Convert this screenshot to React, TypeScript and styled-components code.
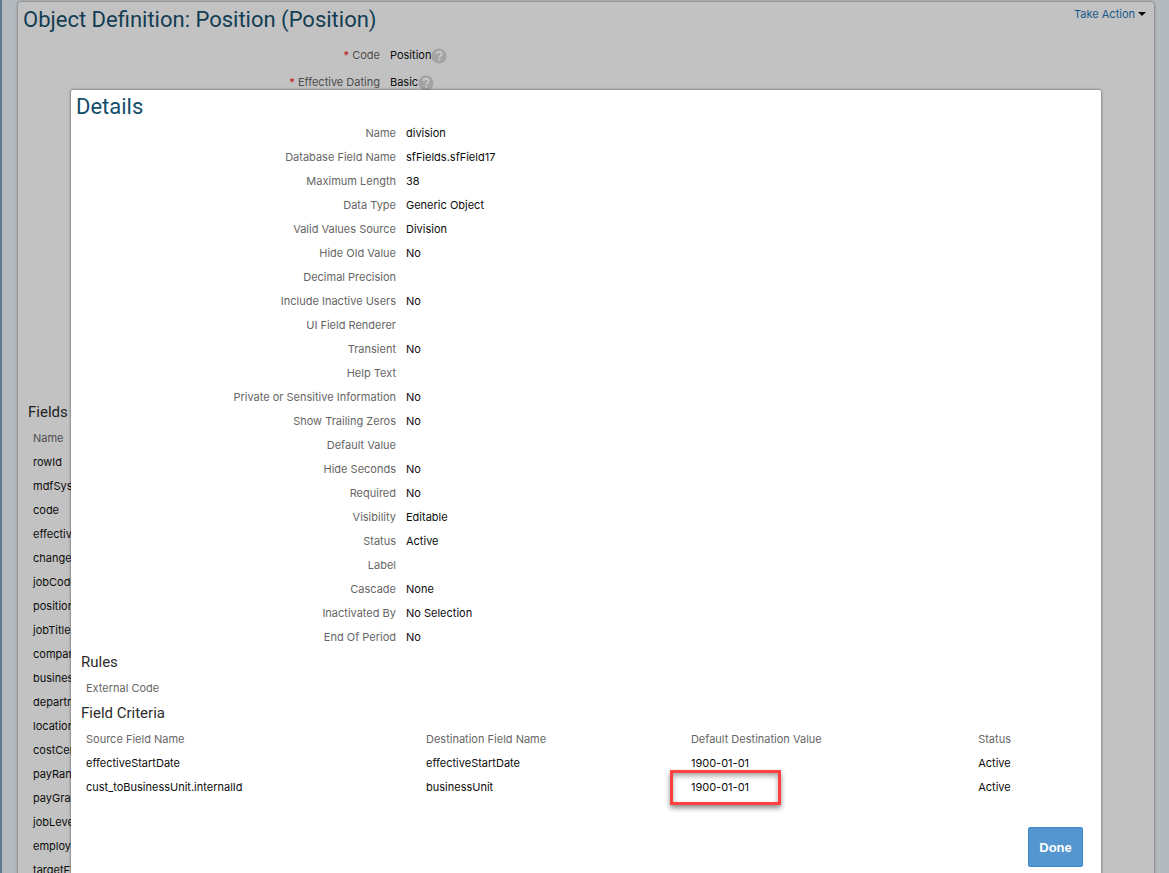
import React from "react";
import styled, { createGlobalStyle } from "styled-components";

const GlobalStyle = createGlobalStyle`
  *, *::before, *::after { box-sizing: border-box; }
  body {
    margin: 0;
    background: #b5babf;
    color: #0c0c0c;
    font-family: Inter, "Liberation Sans", sans-serif;
    font-size: 11px;
    line-height: 24px;
  }
  h1, h2, h3, dl, dt, dd { margin: 0; font-weight: 400; }
`;

const Page = styled.div`
  position: relative;
  height: 100vh;
  overflow: hidden;
  padding: 2px 15px 0 16px;
  border-left: 2px solid #5f7a8f;
`;

const Card = styled.main`
  min-height: 100%;
  padding: 0 5px;
  background: #c2c2c2;
  border-radius: 3px 3px 0 0;
  box-shadow: 0 0 3px rgba(0, 0, 0, 0.55);
`;

const CardHeader = styled.header`
  display: flex;
  justify-content: space-between;
  align-items: flex-start;
  padding-right: 3px;
`;

const Title = styled.h1`
  font-family: Roboto, "Noto Sans", sans-serif;
  font-size: 22px;
  line-height: 36px;
  color: ${(p: { $dim?: boolean }) => (p.$dim ? "#133d53" : "#134e6b")};
`;

const ActionButton = styled.button`
  display: flex;
  align-items: center;
  gap: 3px;
  padding: 0;
  border: 0;
  background: none;
  color: #17588a;
  font: inherit;
  cursor: pointer;
`;

const Caret = styled.span`
  border: 4px solid transparent;
  border-top-color: #0c0c0c;
  border-bottom: 0;
`;

const Fields = styled.dl<{ $label: number; $row: number }>`
  display: grid;
  grid-template-columns: ${(p) => p.$label}px 1fr;
  grid-auto-rows: ${(p) => p.$row}px;
  align-items: center;
  column-gap: 10px;
`;

const ObjectFields = styled(Fields)`
  min-height: 361px;
  align-content: start;
  padding-top: 3px;
`;

const Label = styled.dt<{ $dim?: boolean }>`
  text-align: right;
  color: ${(p) => (p.$dim ? "#4d4d4d" : "#666")};
`;

const Required = styled.span`
  color: #c00e0e;
`;

const Value = styled.dd`
  display: flex;
  align-items: center;
`;

const HelpButton = styled.button`
  display: grid;
  padding: 2px 0 0;
  border: 0;
  background: none;
  cursor: help;
`;

const SectionTitle = styled.h2<{ $dim?: boolean }>`
  padding-left: 5px;
  font-family: Roboto, "Noto Sans", sans-serif;
  font-size: 15px;
  line-height: 27px;
  color: ${(p) => (p.$dim ? "#222" : "#2c2c2c")};
`;

const Table = styled.table<{ $dim?: boolean }>`
  width: calc(100% - 5px);
  margin-left: 5px;
  border-collapse: collapse;
  table-layout: fixed;

  th, td {
    position: relative;
    height: 24px;
    padding: 0 5px;
    text-align: left;
    font-weight: 400;
    white-space: nowrap;
  }
  th { color: ${(p) => (p.$dim ? "#4d4d4d" : "#666")}; }
`;

const Dialog = styled.section`
  position: absolute;
  top: 90px;
  left: 69px;
  right: 68px;
  min-height: calc(100% - 90px);
  padding: 2px 5px 16px;
  background: #fff;
  border-radius: 2px;
  box-shadow: 0 0 3px rgba(0, 0, 0, 0.6);
`;

const DialogTitle = styled(Title).attrs({ as: "h2" })`
  line-height: 29px;
`;

const Marker = styled.span`
  position: absolute;
  top: -5px;
  bottom: -6px;
  left: -16px;
  width: 111px;
  border: 3px solid #ff4141;
  box-shadow: 0 3px 5px rgba(0, 0, 0, 0.45), inset 0 3px 5px rgba(0, 0, 0, 0.35);
  pointer-events: none;
`;

const DialogFooter = styled.footer`
  display: flex;
  justify-content: flex-end;
  padding: 28px 13px 0 0;
`;

const DoneButton = styled.button`
  width: 55px;
  height: 40px;
  padding: 0;
  border: 1px solid #4289c9;
  border-radius: 2px;
  background: #5496cf;
  color: #fff;
  font: 700 13px "Liberation Sans", sans-serif;
  cursor: pointer;
`;

const HelpIcon = () => (
  <svg width="16" height="16" viewBox="0 0 16 16" aria-hidden="true">
    <circle cx="8" cy="8" r="7.6" fill="#a3a3a3" />
    <path
      d="M5.4 6.2C5.5 4.6 6.5 3.8 8 3.8s2.6.9 2.6 2.2c0 1.7-2.2 1.8-2.2 3.6"
      fill="none"
      stroke="#c8c8c8"
      strokeWidth="1.9"
    />
    <rect x="7.3" y="10.7" width="2" height="2" fill="#c8c8c8" />
  </svg>
);

const objectFields = [
  ["Code", "Position"],
  ["Effective Dating", "Basic"],
];

const fieldNames = [
  "rowId", "mdfSystemStatus", "code", "effectiveStatus", "changeReason", "jobCode",
  "positionTitle", "jobTitle", "company", "businessUnit", "department", "location",
  "costCenter", "payRange", "payGrade", "jobLevel", "employeeClass", "targetFTE",
];

const details = [
  ["Name", "division"],
  ["Database Field Name", "sfFields.sfField17"],
  ["Maximum Length", "38"],
  ["Data Type", "Generic Object"],
  ["Valid Values Source", "Division"],
  ["Hide Old Value", "No"],
  ["Decimal Precision", ""],
  ["Include Inactive Users", "No"],
  ["UI Field Renderer", ""],
  ["Transient", "No"],
  ["Help Text", ""],
  ["Private or Sensitive Information", "No"],
  ["Show Trailing Zeros", "No"],
  ["Default Value", ""],
  ["Hide Seconds", "No"],
  ["Required", "No"],
  ["Visibility", "Editable"],
  ["Status", "Active"],
  ["Label", ""],
  ["Cascade", "None"],
  ["Inactivated By", "No Selection"],
  ["End Of Period", "No"],
];

const criteria = [
  { source: "effectiveStartDate", target: "effectiveStartDate", value: "1900-01-01", status: "Active" },
  { source: "cust_toBusinessUnit.internalId", target: "businessUnit", value: "1900-01-01", status: "Active", marked: true },
];

export default function App() {
  return (
    <Page>
      <GlobalStyle />
      <Card>
        <CardHeader>
          <Title $dim>Object Definition: Position (Position)</Title>
          <ActionButton type="button">
            Take Action <Caret />
          </ActionButton>
        </CardHeader>
        <ObjectFields $label={357} $row={27}>
          {objectFields.map(([label, value]) => (
            <React.Fragment key={label}>
              <Label $dim>
                <Required>*</Required> {label}
              </Label>
              <Value>
                {value}
                <HelpButton type="button" aria-label={`Help for ${label}`}>
                  <HelpIcon />
                </HelpButton>
              </Value>
            </React.Fragment>
          ))}
        </ObjectFields>
        <SectionTitle $dim>Fields</SectionTitle>
        <Table $dim>
          <thead>
            <tr><th scope="col">Name</th></tr>
          </thead>
          <tbody>
            {fieldNames.map((name) => (
              <tr key={name}><td>{name}</td></tr>
            ))}
          </tbody>
        </Table>
      </Card>

      <Dialog role="dialog" aria-labelledby="details-title">
        <DialogTitle id="details-title">Details</DialogTitle>
        <Fields $label={320} $row={24}>
          {details.map(([label, value]) => (
            <React.Fragment key={label}>
              <Label>{label}</Label>
              <Value>{value}</Value>
            </React.Fragment>
          ))}
        </Fields>
        <SectionTitle as="h3">Rules</SectionTitle>
        <Table>
          <thead>
            <tr><th scope="col">External Code</th></tr>
          </thead>
        </Table>
        <SectionTitle as="h3">Field Criteria</SectionTitle>
        <Table>
          <colgroup>
            <col width="33.5%" />
            <col width="26.1%" />
            <col width="28.3%" />
            <col />
          </colgroup>
          <thead>
            <tr>
              <th scope="col">Source Field Name</th>
              <th scope="col">Destination Field Name</th>
              <th scope="col">Default Destination Value</th>
              <th scope="col">Status</th>
            </tr>
          </thead>
          <tbody>
            {criteria.map((row) => (
              <tr key={row.source}>
                <td>{row.source}</td>
                <td>{row.target}</td>
                <td>
                  {row.value}
                  {row.marked && <Marker />}
                </td>
                <td>{row.status}</td>
              </tr>
            ))}
          </tbody>
        </Table>
        <DialogFooter>
          <DoneButton type="button">Done</DoneButton>
        </DialogFooter>
      </Dialog>
    </Page>
  );
}
